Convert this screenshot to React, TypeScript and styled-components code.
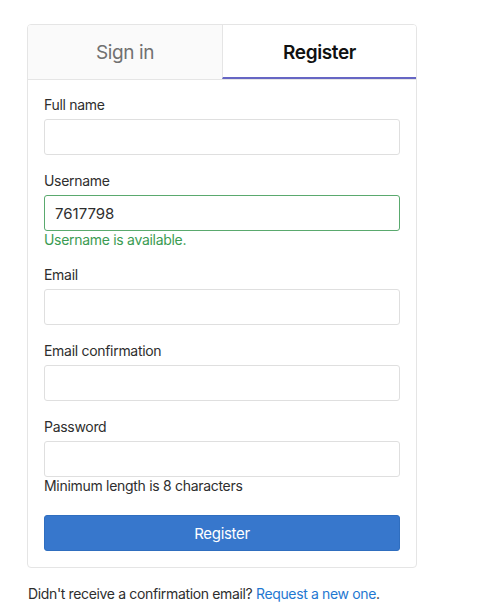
import React from "react";
import styled, { createGlobalStyle } from "styled-components";

const GlobalStyle = createGlobalStyle`
  body {
    margin: 0;
    background: #ffffff;
    font-family: Inter, "Noto Sans", "Liberation Sans", sans-serif;
    color: #2e2e2e;
  }
`;

const Page = styled.div`
  padding: 24px 0 0 27px;
  width: 390px;
`;

const Card = styled.div`
  border: 1px solid #e5e5e5;
  border-radius: 4px;
  overflow: hidden;
`;

const Tabs = styled.div`
  display: grid;
  grid-template-columns: 1fr 1fr;
  border-bottom: 1px solid #e5e5e5;
`;

const Tab = styled.div<{ $active?: boolean }>`
  display: flex;
  align-items: center;
  justify-content: center;
  height: 54px;
  box-sizing: border-box;
  font-size: 19px;
  letter-spacing: -0.4px;
  font-weight: ${(p) => (p.$active ? 600 : 400)};
  color: ${(p) => (p.$active ? "#111111" : "#707070")};
  background: ${(p) => (p.$active ? "#ffffff" : "#fafafa")};
  border-left: ${(p) => (p.$active ? "1px solid #e5e5e5" : "none")};
  border-bottom: 2px solid ${(p) => (p.$active ? "#6666c4" : "transparent")};
  padding-top: 2px;
`;

const Form = styled.form`
  display: flex;
  flex-direction: column;
  padding: 15px 16px 16px;
`;

const Field = styled.div`
  display: flex;
  flex-direction: column;
  margin-bottom: 16px;
`;

const Label = styled.label`
  font-size: 14px;
  line-height: 20px;
  letter-spacing: -0.3px;
  margin-bottom: 4px;
  color: #2e2e2e;
`;

const Input = styled.input<{ $valid?: boolean }>`
  height: 36px;
  box-sizing: border-box;
  border: 1px solid ${(p) => (p.$valid ? "#5aa96e" : "#dfdfdf")};
  border-radius: 3px;
  padding: 0 10px;
  font-family: inherit;
  font-size: 15px;
  color: #2e2e2e;
  outline: none;
`;

const Hint = styled.div<{ $success?: boolean }>`
  font-size: 14px;
  line-height: 18px;
  letter-spacing: -0.3px;
  color: ${(p) => (p.$success ? "#3b9b52" : "#2e2e2e")};
`;

const SubmitButton = styled.button`
  margin-top: 4px;
  height: 36px;
  border: 1px solid #2f6ebf;
  border-radius: 3px;
  background: #3777cc;
  color: #ffffff;
  font-family: inherit;
  font-size: 15px;
  letter-spacing: -0.3px;
  cursor: pointer;
`;

const Footer = styled.p`
  margin: 16px 0 0 1px;
  font-size: 14px;
  line-height: 20px;
  letter-spacing: -0.35px;
  color: #2e2e2e;
`;

const Link = styled.a`
  color: #1f78d1;
  text-decoration: none;
`;

export default function App() {
  return (
    <>
      <GlobalStyle />
      <Page>
        <Card>
          <Tabs>
            <Tab>Sign in</Tab>
            <Tab $active>Register</Tab>
          </Tabs>
          <Form onSubmit={(e) => e.preventDefault()}>
            <Field>
              <Label>Full name</Label>
              <Input />
            </Field>
            <Field>
              <Label>Username</Label>
              <Input $valid defaultValue="7617798" />
              <Hint $success>Username is available.</Hint>
            </Field>
            <Field>
              <Label>Email</Label>
              <Input type="email" />
            </Field>
            <Field>
              <Label>Email confirmation</Label>
              <Input type="email" />
            </Field>
            <Field>
              <Label>Password</Label>
              <Input type="password" />
              <Hint>Minimum length is 8 characters</Hint>
            </Field>
            <SubmitButton type="submit">Register</SubmitButton>
          </Form>
        </Card>
        <Footer>
          Didn't receive a confirmation email? <Link href="#">Request a new one</Link>.
        </Footer>
      </Page>
    </>
  );
}
